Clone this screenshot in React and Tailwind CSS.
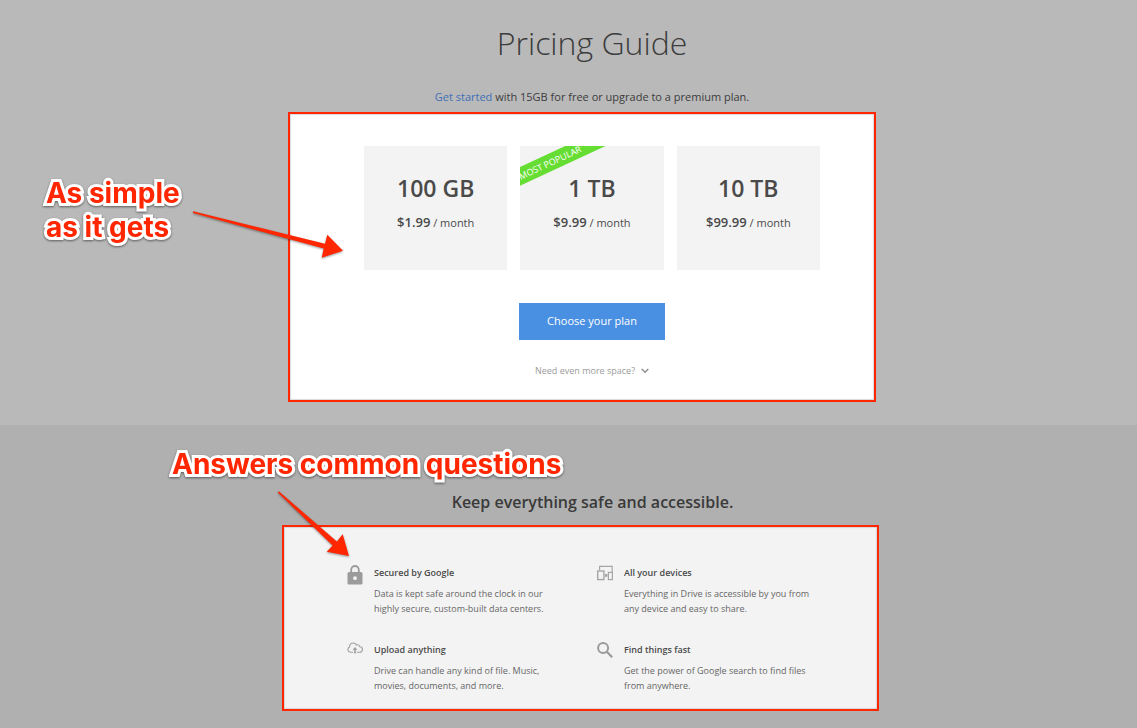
import React from "react";

const plans = [
  { size: "100 GB", price: "$1.99" },
  { size: "1 TB", price: "$9.99", popular: true },
  { size: "10 TB", price: "$99.99" },
];

const features = [
  {
    icon: LockIcon,
    title: "Secured by Google",
    text: "Data is kept safe around the clock in our highly secure, custom-built data centers.",
  },
  {
    icon: DevicesIcon,
    title: "All your devices",
    text: "Everything in Drive is accessible by you from any device and easy to share.",
  },
  {
    icon: CloudIcon,
    title: "Upload anything",
    text: "Drive can handle any kind of file. Music, movies, documents, and more.",
  },
  {
    icon: SearchIcon,
    title: "Find things fast",
    text: "Get the power of Google search to find files from anywhere.",
  },
];

function LockIcon() {
  return (
    <svg width="16" height="20" viewBox="0 0 16 20" fill="none" aria-hidden="true">
      <path d="M4.2 8V4.8a3.8 3.8 0 0 1 7.6 0V8" stroke="#9b9b9b" strokeWidth="1.8" />
      <rect x="0.5" y="7" width="15" height="12.6" rx="1.6" fill="#9b9b9b" />
      <circle cx="8" cy="13.2" r="1.9" fill="#f3f3f3" />
    </svg>
  );
}

function DevicesIcon() {
  return (
    <svg width="16" height="16" viewBox="0 0 16 16" fill="none" stroke="#a6a6a6" aria-hidden="true">
      <path d="M2.6 5V1.4h12.6V7" strokeWidth="1.2" />
      <rect x="0.7" y="6" width="6.2" height="8.6" strokeWidth="1.4" />
      <rect x="11.4" y="7.4" width="4" height="7.2" strokeWidth="1.2" />
      <path d="M8 10.4h2.4" strokeWidth="2.8" />
    </svg>
  );
}

function CloudIcon() {
  return (
    <svg width="16" height="12" viewBox="0 0 16 12" fill="none" stroke="#a0a0a0" aria-hidden="true">
      <path
        d="M6.2 10.2H3.4A2.7 2.7 0 0 1 2.6 5C2.4 2.6 4.1 1 6.1 1c1.5 0 2.7.7 3.3 2 1.6-.6 3.1.3 3.4 1.8 1.6 0 2.6 1.2 2.6 2.6 0 1.6-1.2 2.8-2.8 2.8H9.8"
        strokeWidth="1.1"
      />
      <path d="M8 11.6V6.4" strokeWidth="1.7" />
      <path d="M5.6 7.9 8 5l2.4 2.9z" fill="#a0a0a0" stroke="none" />
    </svg>
  );
}

function SearchIcon() {
  return (
    <svg width="16" height="16" viewBox="0 0 16 16" fill="none" stroke="#9b9b9b" aria-hidden="true">
      <circle cx="6.1" cy="6.1" r="5" strokeWidth="2" />
      <path d="m9.8 9.8 5.4 5.4" strokeWidth="2.2" />
    </svg>
  );
}

function Callout({ className, children }) {
  return (
    <p
      className={`absolute whitespace-nowrap font-['Inter',sans-serif] text-[28px] leading-[34px] font-bold text-[#ff2600] [-webkit-text-stroke:6px_white] [paint-order:stroke_fill] [stroke-linejoin:round] drop-shadow-[0_1px_1px_rgba(0,0,0,0.5)] ${className}`}
    >
      {children}
    </p>
  );
}

function PlanCard({ plan }) {
  return (
    <div className="relative h-31 flex-1 overflow-hidden bg-[#f3f3f3] pt-[27px] text-center text-[#4a4a4a]">
      {plan.popular && (
        <span className="absolute -left-[35px] top-2 h-[17px] w-[130px] -rotate-25 bg-[#66dd33] text-center text-[9px] leading-[17px] font-medium text-white">
          MOST POPULAR
        </span>
      )}
      <h2 className="text-[23px] leading-[30px] font-semibold">{plan.size}</h2>
      <p className="mt-2 text-[11px] leading-[22px]">
        <span className="text-[13px] font-semibold">{plan.price}</span> / month
      </p>
    </div>
  );
}

export default function App() {
  return (
    <div className="min-h-screen overflow-hidden bg-[#b0b0b0] font-['Open_Sans',sans-serif]">
      <section className="flex flex-col items-center bg-[#b9b9b9] pt-5 pb-[23px] pl-[27px]">
        <h1 className="pl-5 text-[32px] leading-[46px] font-light text-[#3c3c3c]">Pricing Guide</h1>
        <p className="mt-[23px] pl-5 text-[11px] leading-4 text-[#3c3c3c]">
          <a href="#start" className="text-[#3f6fb8]">
            Get started
          </a>{" "}
          with 15GB for free or upgrade to a premium plan.
        </p>

        <div className="relative mt-[7px] flex w-full max-w-[588px] flex-col items-center border-2 border-[#ff2600] bg-white pt-8 pb-[21px] pl-5 shadow-[inset_0_0_1px_1px_rgba(0,0,0,0.15)]">
          <div className="flex w-[456px] gap-[13px]">
            {plans.map((plan) => (
              <PlanCard key={plan.size} plan={plan} />
            ))}
          </div>
          <button className="mt-[33px] h-[37px] w-[146px] bg-[#4a90e2] text-[11px] text-white">
            Choose your plan
          </button>
          <button className="mt-[23px] flex items-center gap-[6px] text-[9px] leading-4 text-[#9b9b9b]">
            Need even more space?
            <svg width="8" height="6" viewBox="0 0 8 6" fill="none" aria-hidden="true">
              <path d="m0.7 1 3.3 3.3L7.3 1" stroke="#8f8f8f" strokeWidth="1.5" />
            </svg>
          </button>

          <Callout className="-left-[244px] top-[62px]">
            As simple
            <br />
            as it gets
          </Callout>
          <svg
            className="absolute -left-[100px] top-[94px] drop-shadow-[0_1px_1px_rgba(0,0,0,0.4)]"
            width="160"
            height="56"
            viewBox="190 208 160 56"
            aria-hidden="true"
          >
            <path
              d="M193 211.3 325 243.7 327.3 234.7 343 250.7 321.7 257.7 323.7 248.4 193 213z"
              fill="#ff2600"
            />
          </svg>
        </div>
      </section>

      <section className="flex flex-col items-center pt-[65px] pb-4 pl-6">
        <h2 className="pl-6 text-base leading-6 font-semibold text-[#3a3a3a]">
          Keep everything safe and accessible.
        </h2>

        <div className="relative mt-[11px] w-full max-w-[597px] border-2 border-[#ff2600] bg-[#f3f3f3] pt-[38px] pb-4 pl-[63px] shadow-[inset_0_0_1px_1px_rgba(0,0,0,0.12)]">
          <div className="grid w-[500px] grid-cols-2 gap-y-[26px]">
            {features.map(({ icon: Icon, title, text }) => (
              <div key={title} className="flex gap-[11px]">
                <div className="w-4 shrink-0">
                  <Icon />
                </div>
                <div className="w-[189px] text-[9px] leading-[15px]">
                  <h3 className="font-semibold text-[#4a4a4a]">{title}</h3>
                  <p className="mt-[6px] text-[#666666]">{text}</p>
                </div>
              </div>
            ))}
          </div>

          <Callout className="-left-[112px] -top-[80px]">Answers common questions</Callout>
          <svg
            className="absolute -left-[10px] -top-[39px] drop-shadow-[0_1px_1px_rgba(0,0,0,0.4)]"
            width="80"
            height="74"
            viewBox="274 488 80 74"
            aria-hidden="true"
          >
            <path
              d="M277.8 492.4 278.8 491.2 336.9 541.5 342.7 534.3 349 556 326.7 551.7 332.6 545.6z"
              fill="#ff2600"
            />
          </svg>
        </div>
      </section>
    </div>
  );
}
